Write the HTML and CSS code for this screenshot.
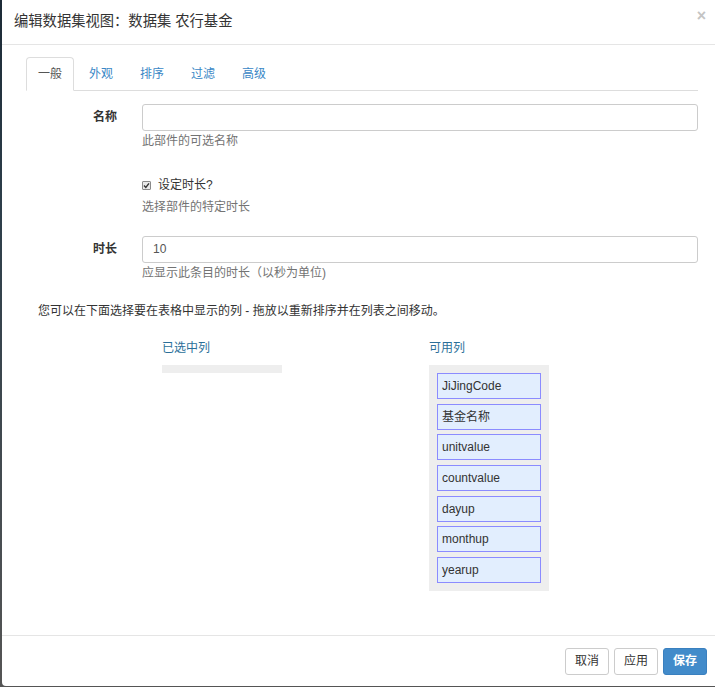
FILE: index.html
```html
<!DOCTYPE html>
<html lang="zh">
<head>
<meta charset="utf-8">
<title>编辑数据集视图</title>
<link rel="stylesheet" href="styles.css">
</head>
<body>
<div class="modal">
  <div class="modal-header">
    <h4 class="modal-title">编辑数据集视图：数据集 农行基金</h4>
    <span class="close">×</span>
  </div>
  <div class="modal-body">
    <ul class="nav-tabs">
      <li class="tab active">一般</li>
      <li class="tab">外观</li>
      <li class="tab">排序</li>
      <li class="tab">过滤</li>
      <li class="tab">高级</li>
    </ul>
    <div class="form">
      <div class="row row-name">
        <label class="lbl">名称</label>
        <div class="field">
          <div class="input"></div>
          <div class="help">此部件的可选名称</div>
        </div>
      </div>
      <div class="row row-check">
        <span></span>
        <div class="field">
          <div class="check-line">
            <span class="checkbox"><svg width="7" height="7" viewBox="0 0 7 7"><path d="M1 3.6 L2.8 5.4 L6 1.4" fill="none" stroke="#333" stroke-width="1.4"/></svg></span>
            <span>设定时长?</span>
          </div>
          <div class="help help-check">选择部件的特定时长</div>
        </div>
      </div>
      <div class="row row-duration">
        <label class="lbl">时长</label>
        <div class="field">
          <div class="input">10</div>
          <div class="help">应显示此条目的时长（以秒为单位)</div>
        </div>
      </div>
    </div>
    <p class="intro">您可以在下面选择要在表格中显示的列 - 拖放以重新排序并在列表之间移动。</p>
    <div class="columns">
      <div class="col col-selected">
        <div class="col-title">已选中列</div>
        <div class="list list-empty"></div>
      </div>
      <div class="col">
        <div class="col-title">可用列</div>
        <div class="list">
          <div class="item">JiJingCode</div>
          <div class="item">基金名称</div>
          <div class="item">unitvalue</div>
          <div class="item">countvalue</div>
          <div class="item">dayup</div>
          <div class="item">monthup</div>
          <div class="item">yearup</div>
        </div>
      </div>
    </div>
  </div>
  <div class="modal-footer">
    <button class="btn">取消</button>
    <button class="btn">应用</button>
    <button class="btn btn-primary">保存</button>
  </div>
</div>
</body>
</html>
```

FILE: styles.css
```css
html, body {
  margin: 0;
  padding: 0;
  height: 100%;
  overflow: hidden;
}
body {
  background: linear-gradient(#1c2a36 0, #2d3e4a 30%, #555 100%);
  font-family: "Liberation Sans", "Noto Sans CJK SC", sans-serif;
  font-size: 12px;
  color: #333;
}
.modal {
  margin-left: 2px;
  width: 720px;
  height: 686px;
  background: #fff;
  border-radius: 0 0 4px 4px;
  display: flex;
  flex-direction: column;
}
.modal-header {
  height: 44px;
  border-bottom: 1px solid #e5e5e5;
  display: flex;
  align-items: center;
  justify-content: space-between;
  padding: 0 16px 0 12px;
}
.modal-title {
  margin: 0 0 2px 0;
  font-size: 14.3px;
  font-weight: normal;
  color: #333;
  line-height: 20px;
}
.close {
  font-size: 16px;
  font-weight: bold;
  color: #c4c4c4;
  margin-bottom: 12px;
  line-height: 16px;
}
.modal-body {
  flex: 1;
  padding: 12px 24px 0 24px;
}
.nav-tabs {
  list-style: none;
  margin: 0;
  padding: 0;
  display: flex;
  border-bottom: 1px solid #ddd;
  height: 33px;
}
.tab {
  border: 1px solid transparent;
  border-radius: 4px 4px 0 0;
  padding: 0 11px;
  line-height: 32px;
  height: 32px;
  margin-right: 3px;
  color: #3a87c6;
}
.tab.active {
  border-color: #ddd;
  border-bottom-color: #fff;
  background: #fff;
  color: #555;
}
.form {
  margin-top: 13px;
}
.row {
  display: grid;
  grid-template-columns: 91px 1fr;
  column-gap: 25px;
}
.lbl {
  font-weight: bold;
  text-align: right;
  line-height: 27px;
  color: #333;
}
.input {
  height: 27px;
  box-sizing: border-box;
  border: 1px solid #ccc;
  border-radius: 3px;
  padding: 0 10px;
  line-height: 25px;
  color: #555;
}
.help {
  margin-top: 2px;
  line-height: 17px;
  color: #737373;
}
.row-check {
  margin-top: 27px;
}
.check-line {
  display: flex;
  align-items: center;
  gap: 7px;
  line-height: 17px;
  color: #333;
}
.checkbox {
  width: 9px;
  height: 9px;
  box-sizing: border-box;
  border: 1px solid #8a8a8a;
  background: #e9e9e9;
  border-radius: 1px;
  display: flex;
  align-items: center;
  justify-content: center;
}
.checkbox svg {
  display: block;
}
.help-check {
  margin-top: 5px;
}
.row-duration {
  margin-top: 20px;
}
.intro {
  margin: 21px 0 0 0;
  padding-left: 12px;
  line-height: 17px;
  color: #333;
}
.columns {
  margin-top: 20px;
  display: flex;
  padding-left: 136px;
}
.col {
  display: flex;
  flex-direction: column;
}
.col-selected {
  width: 267px;
}
.col-title {
  line-height: 17px;
  color: #2b6f99;
  margin-bottom: 8px;
}
.list {
  width: 120px;
  box-sizing: border-box;
  background: #eee;
  padding: 8px;
  display: flex;
  flex-direction: column;
  gap: 4.67px;
}
.list-empty {
  height: 8px;
  padding: 0;
}
.item {
  height: 26px;
  box-sizing: border-box;
  border: 1px solid #8b8bff;
  background: #e2eefe;
  padding-left: 4px;
  line-height: 24px;
  color: #333;
}
.modal-footer {
  border-top: 1px solid #e5e5e5;
  padding: 12px 15px 11px 15px;
  display: flex;
  justify-content: flex-end;
  gap: 5px;
}
.btn {
  height: 27px;
  box-sizing: border-box;
  padding: 0 9px;
  border: 1px solid #ccc;
  border-radius: 3px;
  background: #fff;
  font-family: inherit;
  font-size: 12px;
  color: #333;
  line-height: 25px;
}
.btn-primary {
  background: #428bca;
  border-color: #3a80bf;
  color: #fff;
  font-weight: bold;
}
```
